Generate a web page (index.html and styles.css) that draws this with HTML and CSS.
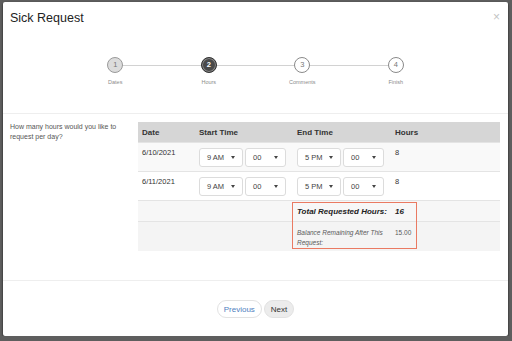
FILE: index.html
```html
<!DOCTYPE html>
<html lang="en">
<head>
  <meta charset="UTF-8" />
  <meta name="viewport" content="width=device-width, initial-scale=1.0" />
  <title>Sick Request</title>
  <link rel="stylesheet" href="styles.css">
</head>
<body>
  <div class="modal">
    <div class="modal-header">
      <h4>Sick Request</h4>
      <span class="close">&times;</span>
    </div>

    <div class="steps-wrap">
      <ol class="steps">
        <li class="step done"><span class="dot">1</span><span class="label">Dates</span></li>
        <li class="step active"><span class="dot">2</span><span class="label">Hours</span></li>
        <li class="step"><span class="dot">3</span><span class="label">Comments</span></li>
        <li class="step"><span class="dot">4</span><span class="label">Finish</span></li>
      </ol>
    </div>

    <div class="modal-body">
      <p class="prompt">How many hours would you like to request per day?</p>
      <div class="table-wrap">
        <table>
          <colgroup>
            <col class="c-date" />
            <col class="c-time" />
            <col class="c-time" />
            <col />
          </colgroup>
          <thead>
            <tr>
              <th>Date</th>
              <th>Start Time</th>
              <th>End Time</th>
              <th>Hours</th>
            </tr>
          </thead>
          <tbody>
            <tr class="striped">
              <td>6/10/2021</td>
              <td>
                <div class="pickers">
                  <span class="pick wide">9 AM<i class="caret"></i></span>
                  <span class="pick">00<i class="caret"></i></span>
                </div>
              </td>
              <td>
                <div class="pickers">
                  <span class="pick wide">5 PM<i class="caret"></i></span>
                  <span class="pick">00<i class="caret"></i></span>
                </div>
              </td>
              <td>8</td>
            </tr>
            <tr>
              <td>6/11/2021</td>
              <td>
                <div class="pickers">
                  <span class="pick wide">9 AM<i class="caret"></i></span>
                  <span class="pick">00<i class="caret"></i></span>
                </div>
              </td>
              <td>
                <div class="pickers">
                  <span class="pick wide">5 PM<i class="caret"></i></span>
                  <span class="pick">00<i class="caret"></i></span>
                </div>
              </td>
              <td>8</td>
            </tr>
            <tr class="total">
              <td></td>
              <td></td>
              <td>Total Requested Hours:</td>
              <td>16</td>
            </tr>
            <tr class="balance">
              <td></td>
              <td></td>
              <td>Balance Remaining After This Request:</td>
              <td>15.00</td>
            </tr>
          </tbody>
        </table>
        <div class="highlight"></div>
      </div>
    </div>

    <div class="modal-footer">
      <button class="btn">Previous</button>
      <button class="btn next">Next</button>
    </div>
  </div>
</body>
</html>
```

FILE: styles.css
```css
body {
  margin: 0;
  background: #5e5e5e;
  font-family: "Liberation Sans", Arial, sans-serif;
  color: #333;
}
.modal {
  margin: 2px 4px 0 3px;
  height: 334px;
  background: #fff;
  border-radius: 2px;
  box-shadow: 0 1px 2px rgba(0,0,0,0.9);
  display: flex;
  flex-direction: column;
}
.modal-header {
  display: flex;
  justify-content: space-between;
  padding: 9px 8px 0 7px;
}
.modal-header h4 {
  margin: 0;
  font-size: 12.5px;
  font-weight: normal;
  line-height: 15px;
  color: #222;
}
.close {
  font-size: 12px;
  line-height: 13px;
  color: #c4c4c4;
}
.steps-wrap {
  padding: 31px 0 27px;
  border-bottom: 1px solid #eee;
}
.steps {
  position: relative;
  list-style: none;
  margin: 0 auto;
  padding: 0;
  width: 374px;
  display: flex;
}
.steps::before {
  content: "";
  position: absolute;
  top: 8px;
  left: 47px;
  right: 47px;
  height: 1px;
  background: #d2d2d2;
}
.step {
  flex: 1;
  display: flex;
  flex-direction: column;
  align-items: center;
}
.dot {
  position: relative;
  width: 14px;
  height: 14px;
  border: 1px solid #8a8a8a;
  border-radius: 50%;
  background: #fff;
  color: #777;
  font-size: 7.5px;
  line-height: 14px;
  text-align: center;
}
.step.done .dot {
  background: #dcdcdc;
  border-color: #9a9a9a;
}
.step.active .dot {
  background: #4a4a4a;
  border-color: #333;
  box-shadow: inset 0 0 0 1px #8a8a8a;
  color: #fff;
  font-weight: bold;
}
.label {
  margin-top: 5px;
  font-size: 5.5px;
  line-height: 8px;
  color: #8c8c8c;
}
.modal-body {
  display: flex;
  padding: 8px 8px 29px 7px;
}
.prompt {
  width: 128px;
  margin: 0;
  font-size: 7px;
  line-height: 10px;
  color: #555;
}
.table-wrap {
  position: relative;
  flex: 1;
}
table {
  width: 100%;
  table-layout: fixed;
  border-collapse: collapse;
  font-size: 7.5px;
}
.c-date {
  width: 57px;
}
.c-time {
  width: 98px;
}
th {
  background: #d6d6d6;
  text-align: left;
  font-size: 8px;
  height: 20px;
  padding: 0 4px;
}
td {
  border-top: 1px solid #e4e4e4;
  padding: 5px 4px 4px;
  vertical-align: top;
  line-height: 9px;
}
tr.striped td {
  background: #f9f9f9;
}
.pickers {
  display: flex;
  gap: 2px;
}
.pick {
  display: flex;
  align-items: center;
  justify-content: space-between;
  box-sizing: border-box;
  width: 41px;
  height: 19px;
  padding: 0 7px 0 7px;
  border: 1px solid #dcdcdc;
  border-radius: 3px;
  background: #fff;
  color: #444;
  font-size: 7.5px;
}
.pick.wide {
  width: 44px;
}
.caret {
  width: 0;
  height: 0;
  border-left: 2.5px solid transparent;
  border-right: 2.5px solid transparent;
  border-top: 3px solid #444;
}
tr.total td {
  background: #f7f7f7;
  padding: 5px 4px 4px;
  line-height: 11px;
  font-weight: bold;
  font-style: italic;
  font-size: 8px;
  color: #222;
}
tr.balance td {
  background: #f4f4f4;
  padding: 6px 4px 3px;
  font-style: italic;
  font-size: 6.5px;
  line-height: 10px;
  color: #5a5a5a;
}
tr.balance td:last-child {
  font-style: normal;
}
.highlight {
  position: absolute;
  left: 154px;
  top: 80px;
  width: 125px;
  height: 47px;
  box-sizing: border-box;
  border: 1.5px solid #ea7a62;
}
.modal-footer {
  display: flex;
  justify-content: center;
  gap: 2px;
  border-top: 1px solid #eee;
  padding-top: 19px;
}
.btn {
  height: 18px;
  padding: 0 6px;
  border: 1px solid #e2e2e2;
  border-radius: 9px;
  background: #fff;
  color: #4f7fc0;
  font-family: "Liberation Sans", Arial, sans-serif;
  font-size: 8px;
}
.btn.next {
  background: #ececec;
  color: #333;
}
```
